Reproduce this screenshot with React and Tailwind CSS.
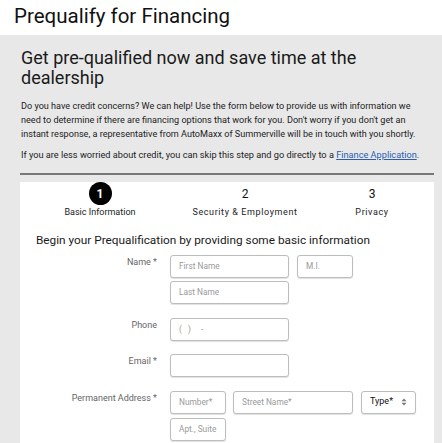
export default function App() {
  const inputCls =
    "h-[23px] rounded-[3px] border border-[#bdbdbd] bg-white shadow-[0_1px_1px_rgba(0,0,0,0.12)] px-[8px] text-[8.3px] text-[#9a9a9a] flex items-center whitespace-nowrap overflow-hidden";
  return (
    <div className="w-[442px] h-[443px] overflow-hidden bg-[#e8e8e8] font-['Roboto',sans-serif] text-[#1a1a1a]">
      <div className="bg-white h-[35px] pl-[14px] text-[20.5px] leading-[33px] text-[#111]">
        Prequalify for Financing
      </div>
      <div className="pl-[20px] pr-[8px]">
        <div className="px-[1px]">
          <h2 className="mt-[13px] text-[18px] leading-[20px] text-[#1a1a1a] pr-[60px]">
            Get pre-qualified now and save time at the dealership
          </h2>
          <p className="mt-[11px] text-[9.1px] leading-[14px] text-[#222] whitespace-nowrap">
            Do you have credit concerns? We can help! Use the form below to provide us with information we
            <br />
            need to determine if there are financing options that work for you. Don't worry if you don't get an
            <br />
            instant response, a representative from AutoMaxx of Summerville will be in touch with you shortly.
          </p>
          <p className="mt-[7px] text-[9.2px] leading-[14px] text-[#222] whitespace-nowrap">
            If you are less worried about credit, you can skip this step and go directly to a{" "}
            <span className="text-[#2a5db0] underline">Finance Application</span>.
          </p>
        </div>
        <div className="mt-[11px] h-[2px] bg-[#777]" />
        <div className="mt-[19px] bg-white h-[300px]">
          <div className="-mt-[12px] flex">
            <div className="w-[160px] flex flex-col items-center">
              <div className="w-[23px] h-[23px] rounded-full bg-black text-white text-[12px] font-bold flex items-center justify-center">1</div>
              <div className="mt-[1px] text-[9px] text-[#222]">Basic Information</div>
            </div>
            <div className="w-[130px] flex flex-col items-center">
              <div className="w-[23px] h-[23px] rounded-full bg-white text-[#111] text-[12px] flex items-center justify-center">2</div>
              <div className="mt-[1px] text-[9px] tracking-[0.6px] text-[#222]">Security &amp; Employment</div>
            </div>
            <div className="w-[124px] flex flex-col items-center">
              <div className="w-[23px] h-[23px] rounded-full bg-white text-[#111] text-[12px] flex items-center justify-center">3</div>
              <div className="mt-[1px] text-[9px] tracking-[0.6px] text-[#222]">Privacy</div>
            </div>
          </div>
          <div className="mt-[12px] pl-[16px] text-[11.8px] leading-[16px] text-[#1a1a1a]">
            Begin your Prequalification by providing some basic information
          </div>
          <div className="mt-[7px] grid grid-cols-[137px_1fr] gap-x-[13px] text-[9px] text-[#666]">
            <div className="text-right pt-[1px]">Name *</div>
            <div className="flex flex-col gap-[3px]">
              <div className="flex gap-[8px]">
                <div className={inputCls + " w-[119px]"}>First Name</div>
                <div className={inputCls + " w-[56px]"}>M.I.</div>
              </div>
              <div className={inputCls + " w-[119px]"}>Last Name</div>
            </div>

            <div className="mt-[14px] text-right pt-[1px]">Phone</div>
            <div className="mt-[14px]">
              <div className={inputCls + " w-[119px] tracking-[2px]"}>( )&nbsp;&nbsp;-</div>
            </div>

            <div className="mt-[13px] text-right pt-[1px]">Email *</div>
            <div className="mt-[13px]">
              <div className={inputCls + " w-[119px]"}></div>
            </div>

            <div className="mt-[14px] text-right pt-[1px]">Permanent Address *</div>
            <div className="mt-[14px] flex flex-col gap-[4px]">
              <div className="flex gap-[7px]">
                <div className={inputCls + " w-[56px]"}>Number*</div>
                <div className={inputCls + " w-[120px]"}>Street Name*</div>
                <div className={inputCls + " w-[55px] ml-[1px] justify-between text-[#111] text-[9px] px-[4px]"}>
                  <span>Type*</span>
                  <svg width="6" height="8" viewBox="0 0 6 8" className="fill-[#777]"><path d="M3 0.5L5.5 3.2H0.5Z" /><path d="M3 7.5L5.5 4.8H0.5Z" /></svg>
                </div>
              </div>
              <div className={inputCls + " w-[56px]"}>Apt., Suite</div>
            </div>
          </div>
        </div>
      </div>
    </div>
  );
}
